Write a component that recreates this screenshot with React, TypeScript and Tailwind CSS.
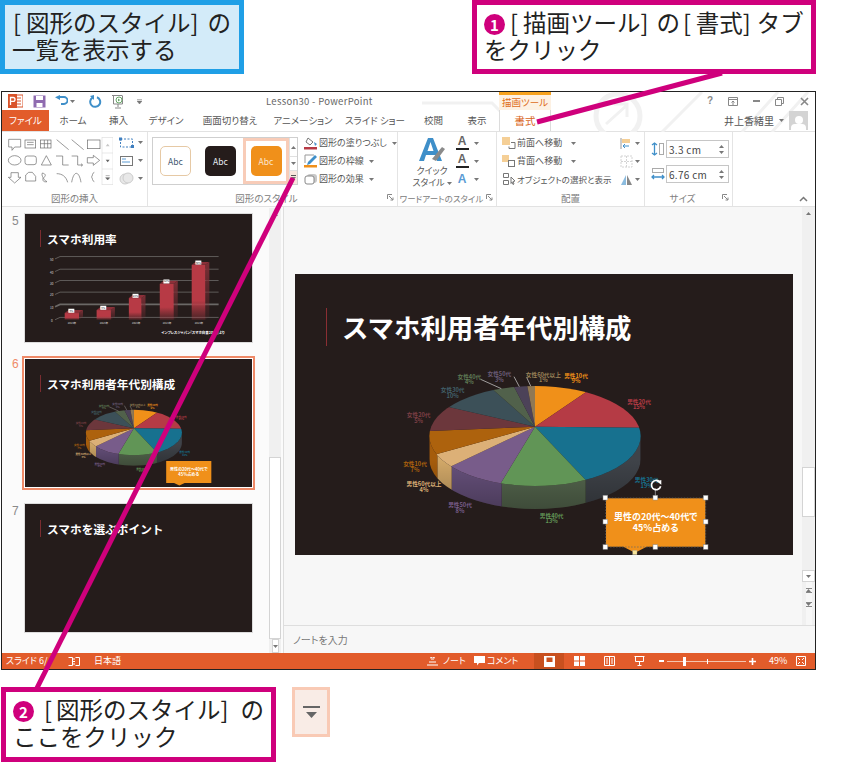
import React from "react";

const MAGENTA = "#cf007c";

const Caret = ({ className = "" }: { className?: string }) => (
  <svg width="5" height="3" viewBox="0 0 5 3" className={`inline-block shrink-0 ${className}`}>
    <path d="M0 0h5L2.5 3z" fill="#777" />
  </svg>
);

const Num = ({ n, className = "" }: { n: string; className?: string }) => (
  <span
    className={`inline-flex h-[21px] w-[21px] items-center justify-center rounded-full bg-[#cf007c] align-[1px] text-[15px] font-bold leading-none text-white ${className}`}
  >
    {n}
  </span>
);

// drawn in the coordinates of a 3x crop, so numbers stay readable
const slices: { x: number; y: number; c: string }[] = [
  { x: 587, y: 97, c: "#f09019" },
  { x: 752, y: 203, c: "#b53b45" },
  { x: 587, y: 360, c: "#17718f" },
  { x: 335, y: 365, c: "#619556" },
  { x: 185, y: 318, c: "#785c8a" },
  { x: 142, y: 282, c: "#dcb077" },
  { x: 118, y: 213, c: "#ad620d" },
  { x: 180, y: 142, c: "#6c373c" },
  { x: 308, y: 88, c: "#3c5058" },
  { x: 372, y: 80, c: "#51614b" },
  { x: 412, y: 78, c: "#4c4258" },
  { x: 435, y: 78, c: "#8f7854" },
];

const labels: [string, string, number, number, string][] = [
  ["男性10代", "9%", 558, 53, "#f09019"],
  ["男性20代", "15%", 747, 131, "#b53b45"],
  ["男性30代", "19%", 770, 366, "#17718f"],
  ["男性40代", "13%", 485, 473, "#619556"],
  ["男性50代", "8%", 210, 441, "#785c8a"],
  ["男性60代以上", "4%", 102, 378, "#dcb077"],
  ["女性10代", "7%", 75, 319, "#ad620d"],
  ["女性20代", "5%", 86, 171, "#7c3f45"],
  ["女性30代", "10%", 188, 96, "#42606a"],
  ["女性40代", "4%", 238, 56, "#5e7a55"],
  ["女性50代", "3%", 328, 48, "#6a5c78"],
  ["女性60代以上", "1%", 460, 50, "#9a8258"],
];

const Pie = ({ id, editing = false, className = "" }: { id: string; editing?: boolean; className?: string }) => {
  const handles = [
    [646, 413],
    [796, 413],
    [947, 413],
    [646, 485],
    [947, 485],
    [646, 561],
    [796, 561],
    [947, 561],
  ];
  let prev = { x: 435, y: 78 };
  return (
    <svg viewBox="0 0 990 600" className={className}>
      <defs>
        <clipPath id={`${id}-top`}>
          <ellipse cx="435" cy="228" rx="317" ry="150" />
        </clipPath>
        <clipPath id={`${id}-wall`}>
          <path d="M118 228A317 150 0 0 0 752 228L752 297A317 150 0 0 1 118 297Z" />
        </clipPath>
        <linearGradient id={`${id}-shade`} x1="0" y1="0" x2="0" y2="1">
          <stop offset="0" stopColor="#000" stopOpacity="0" />
          <stop offset="1" stopColor="#000" stopOpacity="0.28" />
        </linearGradient>
      </defs>
      <g clipPath={`url(#${id}-wall)`}>
        <rect x="587" y="190" width="170" height="270" fill="#3f4349" />
        <rect x="335" y="190" width="252" height="270" fill="#56684f" />
        <rect x="185" y="190" width="150" height="270" fill="#67517c" />
        <rect x="142" y="190" width="43" height="270" fill="#d2a868" />
        <rect x="110" y="190" width="32" height="270" fill="#a55c0c" />
        <rect x="110" y="300" width="650" height="150" fill={`url(#${id}-shade)`} />
      </g>
      <g clipPath={`url(#${id}-top)`}>
        {slices.map((s) => {
          const far = (p: { x: number; y: number }) => `${435 + (p.x - 435) * 1.5},${200 + (p.y - 200) * 1.5}`;
          const pts = `435,200 ${far(prev)} ${far(s)}`;
          prev = s;
          return <polygon key={s.c} points={pts} fill={s.c} />;
        })}
      </g>
      <path d="M272 58l62 28M372 50l16 30M410 52l12 26" stroke="#ddd" strokeWidth="2" fill="none" />
      {labels.map(([a, b, x, y, c]) => (
        <text key={a} x={x} textAnchor="middle" fill={c} fontSize="17" fontWeight="700">
          <tspan x={x} y={y}>
            {a}
          </tspan>
          <tspan x={x} y={y + 17}>
            {b}
          </tspan>
        </text>
      ))}
      <path d="M648 415h298v145h-176l-35 18-35-18h-52z" fill="#f0901a" />
      <text x="797" y="480" textAnchor="middle" fill="#fff" fontSize="27" fontWeight="700">
        男性の20代～40代で
      </text>
      <text x="797" y="514" textAnchor="middle" fill="#fff" fontSize="27" fontWeight="700">
        45％占める
      </text>
      {editing && (
        <g>
          <rect x="647" y="414" width="300" height="147" fill="none" stroke="#666" strokeWidth="2" strokeDasharray="5 4" />
          <path d="M796 413V385" stroke="#bbb" strokeWidth="2" />
          <path d="M808 365a14 14 0 1 0 4 14" fill="none" stroke="#fff" strokeWidth="5" />
          <path d="M800 364l14-4v14z" fill="#fff" />
          {handles.map(([x, y]) => (
            <rect key={`${x}-${y}`} x={x - 7} y={y - 7} width="14" height="14" fill="#fff" stroke="#888" strokeWidth="1.5" />
          ))}
          <rect x="728" y="571" width="13" height="13" fill="#f8e59a" stroke="#999" />
        </g>
      )}
    </svg>
  );
};

const bars = [
  { x: 194, w: 43, top: 325, label: "6%" },
  { x: 290, w: 43, top: 316, label: "9%" },
  { x: 387, w: 38, top: 280, label: "24%" },
  { x: 480, w: 42, top: 237, label: "42%" },
  { x: 576, w: 41, top: 180, label: "60%" },
];

const BarChart = () => (
  <svg viewBox="75 27 682 385" className="absolute left-0 top-0 h-full w-full">
    <defs>
      <linearGradient id="barfade" x1="0" y1="0" x2="0" y2="1">
        <stop offset="0" stopColor="#b73a45" />
        <stop offset="0.65" stopColor="#b73a45" />
        <stop offset="1" stopColor="#b73a45" stopOpacity="0.25" />
      </linearGradient>
      <linearGradient id="barside" x1="0" y1="0" x2="0" y2="1">
        <stop offset="0" stopColor="#7c2f36" />
        <stop offset="1" stopColor="#7c2f36" stopOpacity="0.15" />
      </linearGradient>
    </defs>
    {[155, 193, 227, 262, 299, 338].map((y, i) => (
      <g key={y}>
        <path d={`M165 ${y + 7}L180 ${y}H657`} stroke="#6b6866" strokeWidth={y === 299 ? 5 : 2.5} fill="none" />
        <text x="155" y={y + 13} fontSize="9" fill="#ddd" textAnchor="middle">
          {50 - i * 10}
        </text>
      </g>
    ))}
    {bars.map((b) => (
      <g key={b.x}>
        <path d={`M${b.x + b.w} ${b.top}l12-9V336l-12 9z`} fill="url(#barside)" />
        <path d={`M${b.x} ${b.top}l12-9h${b.w}l-12 9z`} fill="#8c3039" />
        <rect x={b.x} y={b.top} width={b.w} height={345 - b.top} fill="url(#barfade)" />
        <rect x={b.x + 11} y={b.top - 13} width="18" height="12" fill="#fff" />
        <text x={b.x + 20} y={b.top - 4} fontSize="8" fill="#333" textAnchor="middle">
          {b.label}
        </text>
        <text x={b.x + 22} y="359" fontSize="8" fill="#ddd" textAnchor="middle">
          2013年
        </text>
      </g>
    ))}
    <text x="675" y="387" fontSize="10.5" fill="#fff" fontWeight="700" textAnchor="end">
      インプレスジャパン『スマホ白書2013』より
    </text>
  </svg>
);

const ThumbTitle = ({ text }: { text: string }) => (
  <div className="flex items-center pl-[15px] pt-[16px] [font-feature-settings:normal]">
    <div className="h-[17px] w-px bg-[#7a2c30]" />
    <span className="ml-[6px] text-[11.7px] font-bold leading-[17px] text-white">{text}</span>
  </div>
);

const Thumb = ({ n, active = false, children }: { n: string; active?: boolean; children: React.ReactNode }) => (
  <div className="flex pl-[9px]">
    <span
      className={`w-[13px] pl-px pt-[1px] font-['Liberation_Sans',sans-serif] text-[12px] leading-[14px] ${active ? "text-[#ef8a68]" : "text-[#8a8a8a]"}`}
    >
      {n}
    </span>
    <div
      className={
        active ? "-ml-[2px] border-2 border-[#ef8a68] bg-white p-px" : "border border-[#dcdcdc] bg-white"
      }
    >
      <div className="relative h-[128px] w-[227px] overflow-hidden bg-[#251c1b]">{children}</div>
    </div>
  </div>
);

const GalleryShapes = () => (
  <svg width="108" height="48" viewBox="0 0 324 144" className="shrink-0">
    <g fill="none" stroke="#666" strokeWidth="2">
      <path d="M11 7h36v23h-18l-8 10v-10h-10z" />
      <rect x="60" y="9" width="32" height="24" />
      <path d="M66 16h20M66 23h20" />
      <rect x="106" y="9" width="32" height="24" />
      <path d="M118 9v24M128 9v24M106 20h32" />
      <path d="M155 8l36 30M200 8l36 30" />
      <rect x="247" y="9" width="38" height="26" />
      <ellipse cx="29" cy="70" rx="19" ry="14" />
      <rect x="60" y="57" width="34" height="26" rx="7" />
      <path d="M109 84l15-28 15 28z" />
      <path d="M153 57h20v27h18" />
      <path d="M200 57h18v27h14M228 80l5 4-5 4" />
      <path d="M247 62h18v-7l19 15-19 15v-7h-18z" />
      <path d="M18 107h22v14h8l-19 17-19-17h8z" />
      <path d="M62 132v-18l9-8h11l10 12v14z" />
      <path d="M112 108c8 2 12 6 6 12s2 10 8 14c-8 2-14-2-12-8s-6-10-2-18z" />
      <path d="M155 110c16 0 28 8 33 26" />
      <path d="M200 136c6-36 22-36 28 0" />
      <path d="M268 106c-8 2-4 12-9 14 5 2 1 12 9 14" />
    </g>
    <rect x="291" y="1" width="33" height="142" fill="#fff" stroke="#dedede" strokeWidth="2" />
    <path d="M291 48h33M291 96h33" stroke="#dedede" strokeWidth="2" />
    <path d="M302 28l6-8 6 8z" fill="#c8c8c8" />
    <path d="M302 68l6 8 6-8z" fill="#666" />
    <path d="M302 116h12M302 122l6 7 6-7z" fill="#666" stroke="#666" strokeWidth="1.5" />
  </svg>
);

const Tile = ({ className, text }: { className: string; text: string }) => (
  <div className={`flex h-[30px] w-[31px] items-center justify-center rounded-[5px] text-[8.5px] ${className} ${text}`}>Abc</div>
);

const Cmd = ({ icon, label, caretClass = "ml-[5px]" }: { icon: React.ReactNode; label: string; caretClass?: string }) => (
  <div className="flex h-[18px] items-center">
    <span className="flex w-[16px] shrink-0 items-center justify-center">{icon}</span>
    <span className="whitespace-nowrap text-[9px] text-[#555]">{label}</span>
    <Caret className={caretClass} />
  </div>
);

const SmallA = ({ bar, blue = false }: { bar?: string; blue?: boolean }) => (
  <div className="flex h-[18px] items-center gap-[5px]">
    <span className="flex w-[14px] flex-col items-center leading-none">
      <span className={`font-['Liberation_Sans',sans-serif] text-[12px] font-bold leading-[11px] ${blue ? "text-[#5a9bd4]" : "text-[#666]"}`}>A</span>
      {bar && <span className={`mt-px h-[2px] w-[13px] ${bar}`} />}
    </span>
    <Caret />
  </div>
);

const Launcher = () => (
  <svg width="7" height="7" viewBox="0 0 7 7" className="absolute bottom-[5px] right-[3px]">
    <path d="M0.5 5V.5H5M2 2l4 4M6 3.5V6H3.5" stroke="#888" fill="none" />
  </svg>
);

const Group = ({
  w,
  label,
  labelClass = "text-[9.5px]",
  launcher = false,
  children,
}: {
  w: string;
  label: string;
  labelClass?: string;
  launcher?: boolean;
  children: React.ReactNode;
}) => (
  <div className={`relative flex shrink-0 flex-col border-r border-[#e4e4e4] ${w}`}>
    <div className="flex h-[59px] pt-[5px]">{children}</div>
    <div className={`whitespace-nowrap text-center leading-[14px] text-[#808080] ${labelClass}`}>{label}</div>
    {launcher && <Launcher />}
  </div>
);

const SizeInput = ({ value, icon }: { value: string; icon: React.ReactNode }) => (
  <div className="flex h-[18px] items-center">
    <span className="flex w-[17px] justify-center">{icon}</span>
    <div className="flex h-[18px] w-[63px] items-center justify-between border border-[#c6c6c6] bg-white pl-[2px] pr-[4px]">
      <span className="text-[10px] tracking-[0.3px] text-[#444]">{value}</span>
      <span className="flex flex-col gap-[3px]">
        <Caret className="rotate-180" />
        <Caret />
      </span>
    </div>
  </div>
);

const Tab = ({ w, label, className = "text-[#555]" }: { w: string; label: string; className?: string }) => (
  <div className={`flex h-full shrink-0 items-center justify-center whitespace-nowrap text-[9.5px] ${w} ${className}`}>{label}</div>
);

const StatusIcon = ({ on = false, children }: { on?: boolean; children: React.ReactNode }) => (
  <div className={`flex h-[16px] w-[30px] items-center justify-center ${on ? "bg-[#c8501f]" : ""}`}>{children}</div>
);

const App: React.FC = () => {
  return (
    <div className="relative h-[762px] w-[848px] overflow-hidden bg-white font-['Noto_Sans_CJK_JP','Noto_Sans',sans-serif]">
      {/* top callouts */}
      <div className="flex h-[91px] items-start">
        <div className="h-[74px] w-[244px] border-[5px] border-[#1f9fe6] bg-[#d3ebf9] pl-[7px] pt-[4px] text-[23.5px] leading-[27px] text-[#222]">
          <div className="whitespace-nowrap">
            <span className="ml-px mr-[5px]">[</span>図形のスタイル<span className="mr-[9px]">]</span>の
          </div>
          <div className="whitespace-nowrap">一覧を表示する</div>
        </div>
        <div className="ml-[228px] h-[74px] w-[344px] border-[5px] border-[#cf007c] bg-white pl-[7px] pt-[4px] text-[23.5px] leading-[27px] text-[#222]">
          <div className="whitespace-nowrap">
            <Num n="1" className="mr-[5px]" />
            <span className="mr-[5px]">[</span>描画ツール<span className="mr-[8px]">]</span>の
            <span className="ml-[3px] mr-[5px]">[</span>書式<span className="mr-[6px]">]</span>タブ
          </div>
          <div className="whitespace-nowrap">をクリック</div>
        </div>
      </div>

      {/* PowerPoint window */}
      <div className="relative ml-px flex h-[579px] w-[815px] flex-col border border-[#222] bg-white [font-feature-settings:'palt']">
        <svg viewBox="0 0 813 40" className="absolute left-0 top-0 h-[40px] w-[813px]">
          <g fill="none" stroke="#f1f1f1" strokeWidth="3">
            <path d="M420 11h70l8 8h30" />
            <circle cx="527" cy="9" r="4" />
            <circle cx="616" cy="24" r="22" strokeWidth="5" />
            <path d="M604 32l20-18M612 12h13v13" />
            <path d="M660 40l40-40M740 40l36-40M770 40l36-40" />
          </g>
        </svg>
        <div className="relative flex h-[18px] shrink-0 items-center">
          <div className="flex w-[264px] shrink-0 items-center pl-[6px]">
            <svg width="15" height="14" viewBox="0 0 15 14">
              <rect x="6" y="1" width="9" height="12" fill="#fff" stroke="#d9532a" />
              <path d="M8 4h5M8 7h5M8 10h5" stroke="#d9532a" />
              <rect x="0" y="0" width="9" height="14" fill="#d9532a" />
              <path d="M2.500 11V3.500h2.600a1.900 1.900 0 0 1 0 3.800H2.500" fill="none" stroke="#fff" strokeWidth="1.300" />
            </svg>
            <svg width="13" height="13" viewBox="0 0 13 13" className="ml-[10px]">
              <path d="M.5.5h12v12H.5z" fill="#8f6bb0" />
              <rect x="3" y="1" width="7" height="4" fill="#fff" />
              <rect x="3.5" y="8" width="6" height="4" fill="#fff" />
            </svg>
            <svg width="13" height="12" viewBox="0 0 13 12" className="ml-[9px]">
              <path d="M4 2h5a3.2 3.2 0 0 1 0 7H6" fill="none" stroke="#3f8fc9" strokeWidth="1.8" />
              <path d="M5 0v5L0 2.2z" fill="#3f8fc9" />
            </svg>
            <Caret className="ml-[2px]" />
            <svg width="13" height="13" viewBox="0 0 13 13" className="ml-[14px]">
              <path d="M8 2.2a5 5 0 1 1-4.4.4" fill="none" stroke="#3f8fc9" strokeWidth="2" />
              <path d="M5 0v5L1 1z" fill="#3f8fc9" />
            </svg>
            <svg width="15" height="15" viewBox="0 0 15 15" className="ml-[9px]">
              <path d="M1 1.5h10M2.5 1.5V10h9V1.5M7 10v3M4 14h6" fill="none" stroke="#888" />
              <circle cx="8" cy="6" r="3" fill="none" stroke="#6aa86a" />
              <path d="M7 4.5v3l2.2-1.5z" fill="#6aa86a" />
            </svg>
            <svg width="5" height="5" viewBox="0 0 5 5" className="ml-[11px]">
              <path d="M0 .5h5M0 2h5L2.5 5z" fill="#777" stroke="#777" strokeWidth=".5" />
            </svg>
          </div>
          <div className="w-[233px] shrink-0 whitespace-nowrap text-[9.5px] tracking-[0.3px] text-[#666]">Lesson30 - PowerPoint</div>
          <div className="flex h-[18px] w-[52px] shrink-0 items-center justify-center border-t-[3px] border-[#f7a21e] bg-[#fdf1e3] text-[9.5px] text-[#dd6d1a]">
            描画ツール
          </div>
          <div className="flex flex-1 items-center justify-end gap-[15px] pr-[6px]">
            <span className="font-['Liberation_Sans',sans-serif] text-[10px] font-bold leading-none text-[#888]">?</span>
            <svg width="10" height="9" viewBox="0 0 10 9">
              <path d="M.5.5h9v8h-9zM.5 2.5h9M5 8V4M3.5 5.5L5 4l1.5 1.5" fill="none" stroke="#888" />
            </svg>
            <span className="h-[2px] w-[7px] bg-[#888]" />
            <svg width="9" height="9" viewBox="0 0 9 9">
              <path d="M.5 2.5h6v6h-6zM2.5 2.5v-2h6v6h-2" fill="none" stroke="#888" />
            </svg>
            <svg width="9" height="9" viewBox="0 0 9 9" className="ml-[1px]">
              <path d="M1 1l7 7M8 1l-7 7" stroke="#888" strokeWidth="1.6" />
            </svg>
          </div>
        </div>

        <div className="relative flex h-[21px] shrink-0 items-stretch">
          <Tab w="w-[47px]" label="ファイル" className="bg-[#e25c2b] text-white" />
          <Tab w="w-[48px]" label="ホーム" />
          <Tab w="w-[43px]" label="挿入" />
          <Tab w="w-[52px]" label="デザイン" />
          <Tab w="w-[76px]" label="画面切り替え" />
          <Tab w="w-[70px]" label="アニメーション" />
          <Tab w="w-[74px]" label="スライド ショー" />
          <Tab w="w-[43px]" label="校閲" />
          <Tab w="w-[44px]" label="表示" />
          <Tab w="w-[52px]" label="書式" className="relative -mb-px border-x border-[#dcdcdc] bg-white text-[10.5px] text-[#d9651a]" />
          <div className="ml-auto flex items-center pr-[7px]">
            <span className="whitespace-nowrap text-[10px] text-[#555]">井上香緒里</span>
            <Caret className="ml-[5px]" />
            <div className="ml-[5px] flex h-[19px] w-[19px] flex-col items-center justify-end overflow-hidden bg-[#d4d4d4]">
              <div className="h-[8px] w-[8px] rounded-full bg-white" />
              <div className="h-[6px] w-[15px] rounded-t-[4px] bg-white" />
            </div>
          </div>
        </div>

        {/* ribbon */}
        <div className="flex h-[76px] shrink-0 border-y border-[#e2e2e2] bg-white">
          <Group w="w-[146px]" label="図形の挿入">
            <div className="ml-[3px]">
              <GalleryShapes />
            </div>
            <div className="ml-[6px] -mt-[2px] flex flex-col gap-[3px]">
              <div className="flex h-[15px] items-center gap-[3px]">
                <svg width="16" height="12" viewBox="0 0 16 12">
                  <rect x="1.5" y="2" width="12" height="8" fill="none" stroke="#3f7fbf" strokeDasharray="2 1.5" />
                  <rect x="0" y="0.5" width="3" height="3" fill="#3f7fbf" />
                  <rect x="12" y="8" width="3" height="3" fill="#3f7fbf" />
                </svg>
                <Caret />
              </div>
              <div className="flex h-[15px] items-center gap-[3px]">
                <svg width="16" height="12" viewBox="0 0 16 12">
                  <rect x="1.5" y="1.5" width="12" height="9" fill="none" stroke="#777" />
                  <path d="M3 4h4M3 7h8" stroke="#5a9bd4" />
                </svg>
                <Caret />
              </div>
              <div className="flex h-[15px] items-center gap-[3px]">
                <svg width="16" height="13" viewBox="0 0 16 13">
                  <circle cx="6" cy="7" r="5" fill="#e8e8e8" stroke="#ccc" />
                  <circle cx="9" cy="6" r="5" fill="#e8e8e8" stroke="#ccc" />
                </svg>
                <Caret />
              </div>
            </div>
          </Group>

          <Group w="w-[250px]" label="図形のスタイル" labelClass="text-[9.5px] pr-[12px]" launcher>
            <div className="ml-[4px] flex h-[48px] w-[146px] border border-[#cfcfcf]">
              <div className="flex flex-1 items-center pl-[7px]">
                <Tile className="border border-[#e6c9a5] bg-white" text="text-[#3f5870]" />
                <Tile className="ml-[14px] bg-[#251c1b]" text="text-[#e8eef4]" />
                <div className="ml-[7px] flex h-[46px] w-[46px] items-center justify-center border-[3px] border-[#f8ccb8] bg-white">
                  <Tile className="bg-[#f0901a]" text="text-[#fbe6cf]" />
                </div>
              </div>
              <div className="flex w-[9px] flex-col border-l border-[#e0e0e0]">
                <div className="flex h-[18px] items-center justify-center">
                  <Caret className="rotate-180" />
                </div>
                <div className="flex h-[15px] items-center justify-center border-y border-[#e0e0e0]">
                  <Caret />
                </div>
                <div className="flex flex-1 flex-col items-center justify-center gap-px bg-[#f9e6dd]">
                  <span className="h-px w-[5px] bg-[#555]" />
                  <Caret />
                </div>
              </div>
            </div>
            <div className="ml-[5px] -mt-[3px] flex flex-col">
              <Cmd
                label="図形の塗りつぶし"
                icon={
                  <svg width="14" height="14" viewBox="0 0 14 14">
                    <path d="M4 2l5 4-3 3-4-3z" fill="#fff" stroke="#777" />
                    <path d="M10 6l3 2-2 2z" fill="#4a90c8" />
                    <rect x="0" y="11" width="13" height="2.5" fill="#b73a45" />
                  </svg>
                }
              />
              <Cmd
                label="図形の枠線"
                icon={
                  <svg width="14" height="14" viewBox="0 0 14 14">
                    <path d="M1 9V1h9" fill="none" stroke="#999" />
                    <path d="M4 8l7-7 2 2-7 7-3 1z" fill="#3f8fc9" />
                    <rect x="0" y="11" width="13" height="2.5" fill="#f0901a" />
                  </svg>
                }
              />
              <Cmd
                label="図形の効果"
                icon={
                  <svg width="14" height="14" viewBox="0 0 14 14">
                    <rect x="3" y="2" width="10" height="9" rx="3" fill="#c8c8c8" />
                    <rect x="1" y="4" width="9" height="8" rx="2" fill="#fff" stroke="#888" />
                  </svg>
                }
              />
            </div>
          </Group>

          <Group w="w-[99px]" label="ワードアートのスタイル" labelClass="text-[8.5px] pr-[11px]" launcher>
            <div className="ml-[14px] flex w-[40px] flex-col items-center">
              <svg width="28" height="27" viewBox="0 0 28 27">
                <path d="M10 1h5l9 23h-5l-2-6H8l-2 6H1zM9.5 14h6L12.5 5z" fill="#3f8fc9" fillRule="evenodd" />
                <path d="M14 22l10-12 3 2-9 12z" fill="#8a8a8a" />
              </svg>
              <span className="mt-[1px] whitespace-nowrap text-[9px] leading-[12px] text-[#555]">クイック</span>
              <span className="flex items-center whitespace-nowrap text-[9px] leading-[12px] text-[#555]">
                スタイル
                <Caret className="ml-[2px]" />
              </span>
            </div>
            <div className="ml-[3px] -mt-[3px] flex flex-col">
              <SmallA bar="bg-[#222]" />
              <SmallA bar="bg-[#222]" />
              <SmallA blue />
            </div>
          </Group>

          <Group w="w-[148px]" label="配置">
            <div className="ml-[4px] -mt-[3px] flex w-[118px] flex-col">
              <Cmd
                label="前面へ移動"
                caretClass="ml-[9px]"
                icon={
                  <svg width="14" height="14" viewBox="0 0 14 14">
                    <rect x="0" y="1" width="8" height="8" fill="#f5cf96" />
                    <path d="M9 6.5h4v6H7v-2" fill="none" stroke="#777" />
                  </svg>
                }
              />
              <Cmd
                label="背面へ移動"
                caretClass="ml-[9px]"
                icon={
                  <svg width="14" height="14" viewBox="0 0 14 14">
                    <rect x="0" y="1" width="7" height="7" fill="#f5cf96" />
                    <rect x="6.5" y="6.5" width="6" height="6" fill="#fff" stroke="#777" />
                  </svg>
                }
              />
              <div className="flex h-[18px] items-center">
                <span className="flex w-[16px] shrink-0 items-center justify-center">
                  <svg width="14" height="14" viewBox="0 0 14 14">
                    <path d="M1.5 1.5h5v4h-5zM1.5 8.5h5v4h-5zM9 5l4 4-2 .5 1 2.5-1 .5-1-2.500-1 1.500z" fill="none" stroke="#777" />
                  </svg>
                </span>
                <span className="whitespace-nowrap text-[8.5px] text-[#555]">オブジェクトの選択と表示</span>
              </div>
            </div>
            <div className="ml-[1px] -mt-[3px] flex flex-col">
              <div className="flex h-[18px] items-center gap-[2px]">
                <svg width="13" height="13" viewBox="0 0 13 13">
                  <path d="M1 1v11" stroke="#999" />
                  <rect x="2" y="2" width="8" height="4" fill="#f5cf96" />
                  <path d="M3 9h6M3 9l2-2M3 9l2 2" stroke="#3f8fc9" fill="none" />
                </svg>
                <Caret />
              </div>
              <div className="flex h-[18px] items-center gap-[2px]">
                <svg width="13" height="13" viewBox="0 0 13 13">
                  <path d="M1 1h11v11H1zM6.500 1v11M1 6.500h11" fill="none" stroke="#d4d4d4" strokeDasharray="2 1" />
                </svg>
                <Caret />
              </div>
              <div className="flex h-[18px] items-center gap-[2px]">
                <svg width="13" height="13" viewBox="0 0 13 13">
                  <path d="M6 2v10H1z" fill="#3f8fc9" opacity=".6" />
                  <path d="M7 2v10h5z" fill="#888" />
                </svg>
                <Caret />
              </div>
            </div>
          </Group>

          <Group w="w-[88px]" label="サイズ" labelClass="text-[9.5px] pr-[12px]" launcher>
            <div className="ml-[4px] flex flex-col gap-[7px] pt-[3px]">
              <SizeInput
                value="3.3 cm"
                icon={
                  <svg width="14" height="14" viewBox="0 0 14 14">
                    <path d="M3.500 1v12M1 3l2.500-2L6 3M1 11l2.500 2L6 11" fill="none" stroke="#3f8fc9" strokeWidth="1.300" />
                    <rect x="8.500" y="1.500" width="4" height="11" fill="none" stroke="#aaa" />
                  </svg>
                }
              />
              <SizeInput
                value="6.76 cm"
                icon={
                  <svg width="14" height="14" viewBox="0 0 14 14">
                    <rect x="1.500" y="1.500" width="11" height="4" fill="none" stroke="#aaa" />
                    <path d="M1 10h12M3 8l-2 2 2 2M11 8l2 2-2 2" fill="none" stroke="#3f8fc9" strokeWidth="1.300" />
                  </svg>
                }
              />
            </div>
          </Group>
          <div className="relative flex-1">
            <svg width="9" height="6" viewBox="0 0 9 6" className="absolute bottom-[4px] right-[7px]">
              <path d="M1 5l3.500-3.500L8 5" fill="none" stroke="#777" strokeWidth="1.500" />
            </svg>
          </div>
        </div>

        {/* main area */}
        <div className="flex min-h-0 flex-1 bg-[#f7f7f7]">
          <div className="flex w-[282px] shrink-0 border-r border-[#dedede] bg-[#fbfbfb]">
            <div className="flex w-[267px] shrink-0 flex-col gap-[13px] pt-[6px]">
              <Thumb n="5">
                <ThumbTitle text="スマホ利用率" />
                <BarChart />
              </Thumb>
              <Thumb n="6" active>
                <ThumbTitle text="スマホ利用者年代別構成" />
                <Pie id="thumb" className="absolute left-[43px] top-[39px] h-[91px] w-[150px]" />
              </Thumb>
              <Thumb n="7">
                <ThumbTitle text="スマホを選ぶポイント" />
              </Thumb>
            </div>
            <div className="mt-px flex w-[12px] flex-col items-center bg-[#f0f0f0]">
              <div className="flex h-[12px] w-full items-center justify-center">
                <Caret className="rotate-180" />
              </div>
              <div className="mt-[237px] h-[182px] w-full border border-[#d4d4d4] bg-white" />
              <div className="flex flex-1 items-center justify-center border border-[#d4d4d4] bg-white">
                <Caret />
              </div>
            </div>
          </div>

          <div className="flex min-w-0 flex-1 flex-col">
            <div className="flex h-[418px] shrink-0">
              <div className="flex-1 pl-[11px] pt-[67px]">
                <div className="relative h-[281px] w-[498px] overflow-hidden bg-[#251c1b]">
                  <div className="flex items-center pl-[31px] pt-[34px] [font-feature-settings:normal]">
                    <div className="h-[38px] w-px bg-[#8a2e33]" />
                    <span className="ml-[15px] text-[26.4px] font-bold leading-[38px] text-white">スマホ利用者年代別構成</span>
                  </div>
                  <Pie id="main" editing className="absolute left-[95px] top-[86px] h-[200px] w-[330px]" />
                </div>
              </div>
              <div className="flex w-[13px] shrink-0 flex-col items-center bg-[#f0f0f0]">
                <div className="flex h-[12px] w-full items-center justify-center">
                  <Caret className="rotate-180" />
                </div>
                <div className="mt-[248px] h-[50px] w-full border border-[#d4d4d4] bg-white" />
                <div className="mt-[53px] flex h-[12px] w-full items-center justify-center border border-[#d4d4d4] bg-white">
                  <Caret />
                </div>
                <div className="flex flex-1 flex-col items-center bg-[#f7f7f7] pt-[6px]">
                  <span className="h-px w-[6px] bg-[#888]" />
                  <Caret className="rotate-180" />
                  <span className="h-px w-[6px] bg-[#888]" />
                  <span className="mt-[9px] h-px w-[6px] bg-[#888]" />
                  <Caret />
                  <span className="h-px w-[6px] bg-[#888]" />
                </div>
              </div>
            </div>
            <div className="flex flex-1 items-center border-t border-[#dedede] pl-[9px] text-[10px] text-[#777]">ノートを入力</div>
          </div>
        </div>

        {/* status bar */}
        <div className="flex h-[16px] shrink-0 items-center bg-[#e25c2b] text-[9px] text-white">
          <span className="ml-[4px] w-[62px] whitespace-nowrap">スライド 6/</span>
          <svg width="12" height="9" viewBox="0 0 12 9">
            <path d="M.5.500h4v8h-4M7.500.500h4v8h-4M5 2h2M5 4.500h2M5 7h2" fill="none" stroke="#fff" />
          </svg>
          <span className="ml-[14px] whitespace-nowrap">日本語</span>
          <svg width="11" height="9" viewBox="0 0 11 9" className="ml-[306px]">
            <path d="M4 2h3M2 5h7M0 8h11M3 1l2.500-1L8 1" stroke="#fff" fill="none" />
          </svg>
          <span className="ml-[5px] w-[31px] whitespace-nowrap">ノート</span>
          <svg width="11" height="10" viewBox="0 0 11 10">
            <path d="M0 0h11v7H5L3 9.500V7H0z" fill="#fff" />
          </svg>
          <span className="ml-[2px] w-[41px] whitespace-nowrap">コメント</span>
          <div className="ml-[6px] flex">
            <StatusIcon on>
              <svg width="11" height="11" viewBox="0 0 11 11">
                <rect x="0" y="0" width="11" height="11" fill="#fff" />
                <rect x="2.500" y="1.500" width="6" height="4.500" fill="#c8501f" />
              </svg>
            </StatusIcon>
            <StatusIcon>
              <svg width="11" height="10" viewBox="0 0 11 10">
                <path d="M0 0h5v4.500H0zM6 0h5v4.500H6zM0 5.500h5V10H0zM6 5.500h5V10H6z" fill="#fff" />
              </svg>
            </StatusIcon>
            <StatusIcon>
              <svg width="11" height="10" viewBox="0 0 11 10">
                <path d="M.5.500h10v9H.500zM5.500.500v9M2 3h2M2 5h2M2 7h2M7 3h2M7 5h2M7 7h2" fill="none" stroke="#fff" />
              </svg>
            </StatusIcon>
            <StatusIcon>
              <svg width="11" height="10" viewBox="0 0 11 10">
                <path d="M.5.500h10M1.500.500v5h8v-5M5.500 5.500v4M3.500 9.500h4" fill="none" stroke="#fff" />
              </svg>
            </StatusIcon>
          </div>
          <div className="ml-[5px] flex w-[100px] items-center">
            <span className="h-[2px] w-[5px] bg-white" />
            <div className="relative ml-[3px] h-px w-[79px] bg-[#f5c4ad]">
              <span className="absolute left-[16px] top-[-4px] h-[9px] w-[3px] bg-white" />
              <span className="absolute left-[40px] top-[-2px] h-[5px] w-px bg-white" />
            </div>
            <svg width="7" height="7" viewBox="0 0 7 7" className="ml-[3px]">
              <path d="M3.500 0v7M0 3.500h7" stroke="#fff" strokeWidth="1.600" />
            </svg>
          </div>
          <span className="ml-[10px] w-[27px] whitespace-nowrap">49%</span>
          <svg width="10" height="10" viewBox="0 0 10 10">
            <path d="M.5.500h9v9h-9zM2 2l2 2M8 2L6 4M2 8l2-2M8 8L6 6" fill="none" stroke="#fff" />
          </svg>
        </div>
      </div>

      {/* bottom callout and enlarged button */}
      <div className="mt-[17px] flex items-start">
        <div className="ml-px h-[75px] w-[275px] border-[5px] border-[#cf007c] bg-white pl-[7px] pt-[4px] text-[23.5px] leading-[27px] text-[#222]">
          <div className="whitespace-nowrap">
            <Num n="2" className="mr-[10px]" />
            <span className="mr-[4px]">[</span>図形のスタイル<span className="mr-[12px]">]</span>の
          </div>
          <div className="whitespace-nowrap">ここをクリック</div>
        </div>
        <div className="ml-[16px] flex h-[50px] w-[38px] flex-col items-center justify-center border-[3px] border-[#f9cab5] bg-[#f9ece6]">
          <span className="h-[2px] w-[17px] bg-[#666]" />
          <svg width="11" height="6" viewBox="0 0 11 6" className="mt-[4px]">
            <path d="M0 0h11L5.500 6z" fill="#666" />
          </svg>
        </div>
      </div>

      {/* leader lines */}
      <svg viewBox="0 0 848 762" className="pointer-events-none absolute left-0 top-0 z-20 h-[762px] w-[848px]">
        <path d="M722 73L537 122" stroke={MAGENTA} strokeWidth="5" fill="none" />
        <path d="M293 178L37 688" stroke={MAGENTA} strokeWidth="5" fill="none" />
      </svg>
    </div>
  );
};

export default App;
